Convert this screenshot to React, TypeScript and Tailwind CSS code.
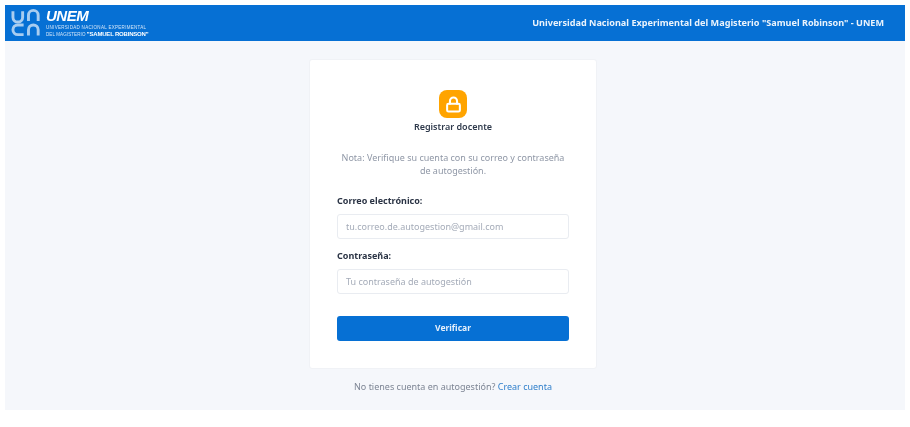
import { Lock } from "lucide-react";

function Logo() {
  return (
    <div className="flex items-center gap-[2px]">
      <svg width="33" height="30" viewBox="0 0 34 30" fill="none" className="text-[#a9cdf0]">
        <path d="M2 3v6a5 5 0 0 0 10 0V3" stroke="currentColor" strokeWidth="3" />
        <path d="M18 13V7a5 5 0 0 1 10 0v6" stroke="currentColor" strokeWidth="3" />
        <path d="M13 17h-6a5 5 0 0 0 0 10h6" stroke="currentColor" strokeWidth="3" />
        <path d="M18 28v-6a5 5 0 0 1 10 0v6" stroke="currentColor" strokeWidth="3" />
      </svg>
      <div className="flex flex-col text-white font-['Liberation_Sans',sans-serif]">
        <span className="text-[15px] leading-[14px] font-bold italic tracking-[-0.5px]">UNEM</span>
        <span className="mt-[2px] text-[4.5px] leading-[6px] text-[#d5e6f8] tracking-[0.3px]">
          UNIVERSIDAD NACIONAL EXPERIMENTAL
        </span>
        <span className="text-[4.5px] leading-[6px] text-[#d5e6f8] tracking-[0.1px] whitespace-nowrap">
          DEL MAGISTERIO <b className="text-[6px] text-white tracking-[-0.2px]">"SAMUEL ROBINSON"</b>
        </span>
      </div>
    </div>
  );
}

function Field({ label, placeholder, type }: { label: string; placeholder: string; type: string }) {
  return (
    <div className="flex flex-col">
      <label className="text-[9px] leading-[14px] font-bold text-[#2b3445]">{label}</label>
      <input
        type={type}
        placeholder={placeholder}
        className="mt-[6px] h-[25px] w-full rounded-[3px] border border-[#e9ecf1] bg-white px-[8px] text-[9px] outline-none placeholder:text-[#a4abb8]"
      />
    </div>
  );
}

export default function App() {
  return (
    <div className="flex h-[427px] w-[910px] flex-col bg-white pt-[5px] pr-[5px] pb-[17px] pl-[5px] font-['Noto_Sans',sans-serif] blur-[0.35px]">
      <header className="flex h-[36px] shrink-0 items-center justify-between bg-[#0670d4] pr-[21px] pl-[6px]">
        <Logo />
        <span className="text-[9.1px] font-bold text-[#eaf3fc]">
          Universidad Nacional Experimental del Magisterio "Samuel Robinson" - UNEM
        </span>
      </header>
      <main className="flex flex-1 flex-col items-center bg-[#f5f7fb] pt-[18px] pr-[4px]">
        <div className="h-[310px] w-[288px] rounded-[3px] border border-[#f0f2f6] bg-white px-[27px] pt-[30px]">
          <div className="flex flex-col items-center">
            <div className="flex h-[28px] w-[28px] items-center justify-center rounded-[8px] bg-[#ffa400]">
              <Lock className="h-[17px] w-[17px] text-white" strokeWidth={2.9} />
            </div>
            <h1 className="mt-[2px] text-[9px] leading-[14px] font-semibold text-[#2f3a4c]">Registrar docente</h1>
            <p className="mt-[17px] w-[232px] text-center text-[9px] leading-[13px] text-[#8f97a6]">
              Nota: Verifique su cuenta con su correo y contraseña de autogestión.
            </p>
          </div>
          <form className="mt-[17px] flex flex-col gap-[10px]">
            <Field label="Correo electrónico:" placeholder="tu.correo.de.autogestion@gmail.com" type="email" />
            <Field label="Contraseña:" placeholder="Tu contraseña de autogestión" type="password" />
            <button
              type="button"
              className="mt-[12px] h-[25px] w-full rounded-[3px] bg-[#0670d4] text-[8.5px] font-bold text-[#e6f0fb]"
            >
              Verificar
            </button>
          </form>
        </div>
        <p className="mt-[11px] text-[9px] leading-[14px] text-[#7d8594]">
          No tienes cuenta en autogestión? <a className="text-[#2f7fcb]">Crear cuenta</a>
        </p>
      </main>
    </div>
  );
}
